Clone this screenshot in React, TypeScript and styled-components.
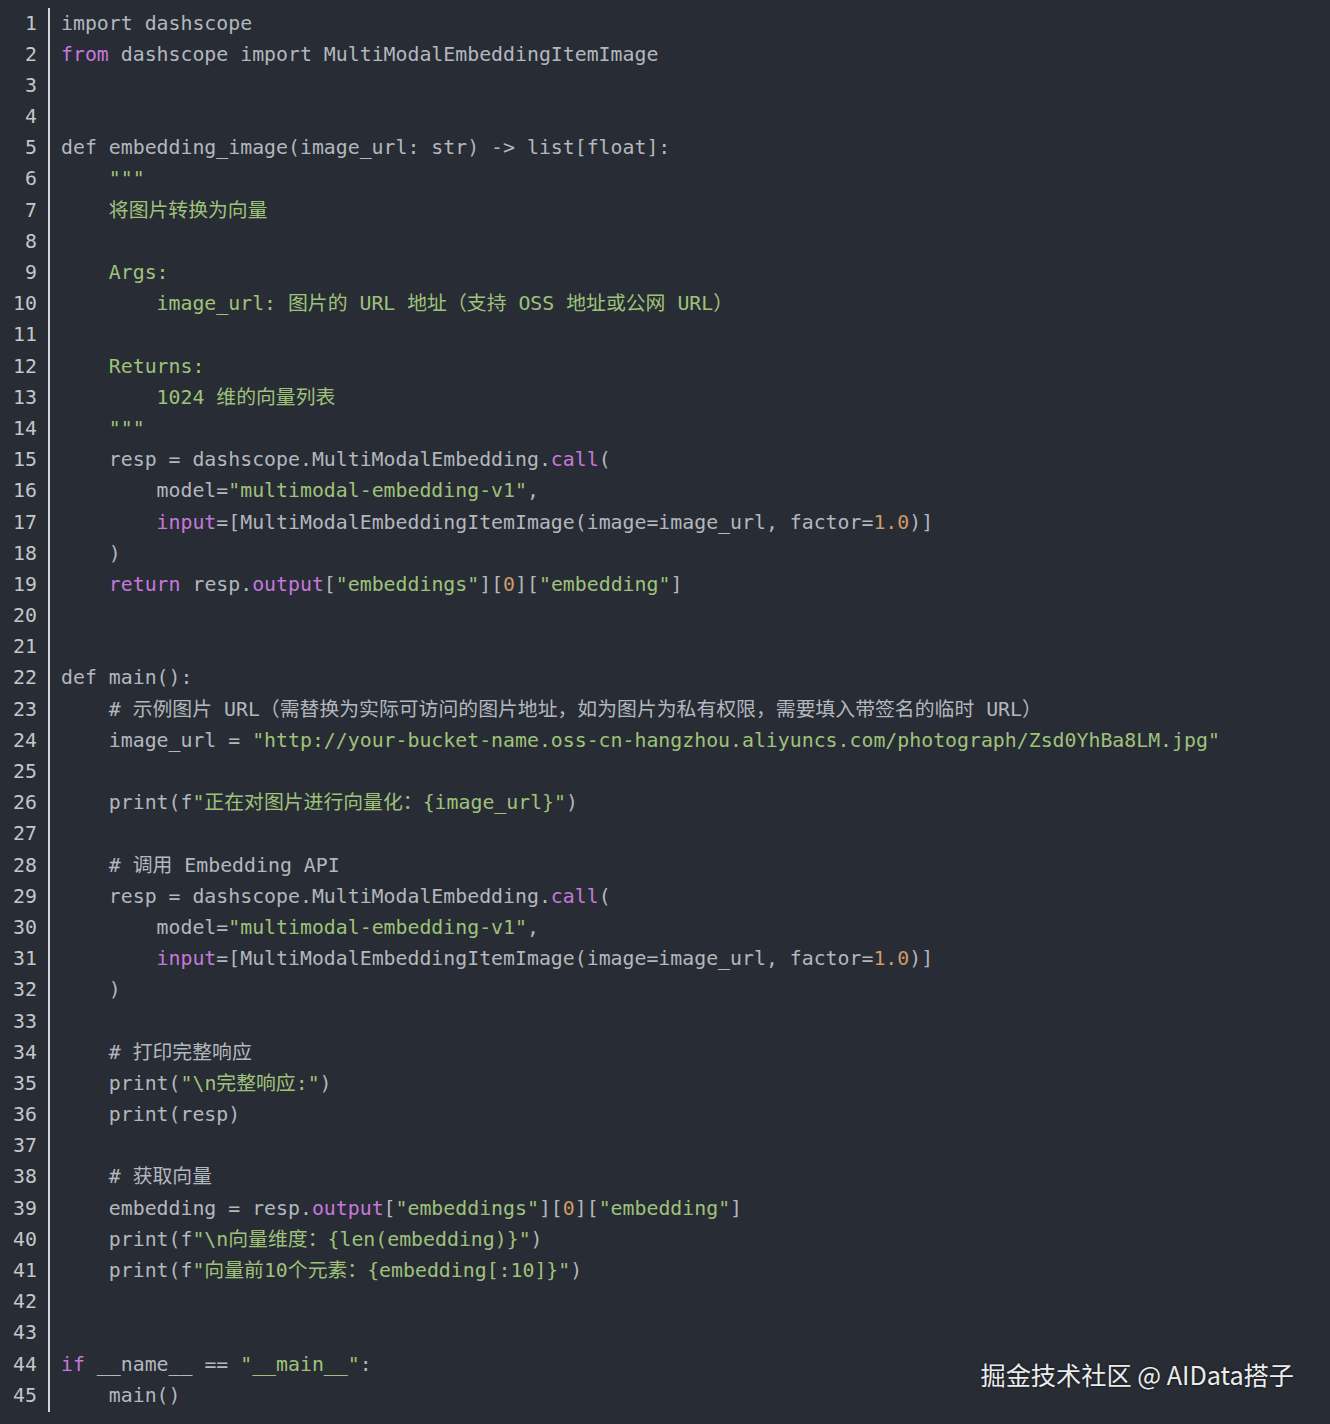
import React from "react";
import styled, { createGlobalStyle } from "styled-components";

const GlobalStyle = createGlobalStyle`
  html, body {
    margin: 0;
    padding: 0;
    background: #282c34;
  }
  body {
    width: 1330px;
    height: 1424px;
    overflow: hidden;
  }
`;

const Page = styled.div`
  position: relative;
  width: 1330px;
  height: 1424px;
  background: #282c34;
  box-sizing: border-box;
  padding-top: 7.5px;
`;

const Editor = styled.div`
  display: flex;
  font-family: "DejaVu Sans Mono", "Noto Sans CJK SC", monospace;
  font-size: 19.85px;
  line-height: 31.2px;
  white-space: pre;
`;

const Gutter = styled.div`
  width: 37px;
  padding-right: 11px;
  border-right: 2px solid #d4d6d9;
  text-align: right;
  color: #c3c6ca;
  padding-bottom: 1px;
`;

const Num = styled.div`
  height: 31.2px;
`;

const Code = styled.div`
  padding-left: 11px;
  color: #b3b7be;
`;

const Line = styled.div`
  height: 31.2px;
`;

type Kind = "k" | "s" | "n" | "p";

const Tok = styled.span<{ $kind: Kind }>`
  color: ${(p) =>
    p.$kind === "k"
      ? "#c678dd"
      : p.$kind === "s"
      ? "#9fc27a"
      : p.$kind === "n"
      ? "#d19a66"
      : "inherit"};
`;

const Watermark = styled.div`
  position: absolute;
  right: 36px;
  top: 1356px;
  font-family: "Noto Sans CJK SC", "Noto Sans", sans-serif;
  font-size: 25.2px;
  line-height: 36px;
  color: #ececec;
  text-shadow: 0 0 3px rgba(0, 0, 0, 0.6);
  white-space: pre;
`;

type Seg = [Kind, string];
const p = (t: string): Seg => ["p", t];
const k = (t: string): Seg => ["k", t];
const s = (t: string): Seg => ["s", t];
const n = (t: string): Seg => ["n", t];

const callBlock: Seg[][] = [
  [p("    resp = dashscope.MultiModalEmbedding."), k("call"), p("(")],
  [p("        model="), s('"multimodal-embedding-v1"'), p(",")],
  [
    p("        "),
    k("input"),
    p("=[MultiModalEmbeddingItemImage(image=image_url, factor="),
    n("1.0"),
    p(")]"),
  ],
  [p("    )")],
];

const lines: Seg[][] = [
  [p("import dashscope")],
  [k("from"), p(" dashscope import MultiModalEmbeddingItemImage")],
  [],
  [],
  [p("def embedding_image(image_url: str) -> list[float]:")],
  [p("    "), s('"""')],
  [p("    "), s("将图片转换为向量")],
  [],
  [p("    "), s("Args:")],
  [p("        "), s("image_url: 图片的 URL 地址（支持 OSS 地址或公网 URL）")],
  [],
  [p("    "), s("Returns:")],
  [p("        "), s("1024 维的向量列表")],
  [p("    "), s('"""')],
  ...callBlock,
  [
    p("    "),
    k("return"),
    p(" resp."),
    k("output"),
    p("["),
    s('"embeddings"'),
    p("]["),
    n("0"),
    p("]["),
    s('"embedding"'),
    p("]"),
  ],
  [],
  [],
  [p("def main():")],
  [
    p(
      "    # 示例图片 URL（需替换为实际可访问的图片地址，如为图片为私有权限，需要填入带签名的临时 URL）"
    ),
  ],
  [
    p("    image_url = "),
    s('"http://your-bucket-name.oss-cn-hangzhou.aliyuncs.com/photograph/Zsd0YhBa8LM.jpg"'),
  ],
  [],
  [p("    print(f"), s('"正在对图片进行向量化：{image_url}"'), p(")")],
  [],
  [p("    # 调用 Embedding API")],
  ...callBlock,
  [],
  [p("    # 打印完整响应")],
  [p("    print("), s('"\\n完整响应:"'), p(")")],
  [p("    print(resp)")],
  [],
  [p("    # 获取向量")],
  [
    p("    embedding = resp."),
    k("output"),
    p("["),
    s('"embeddings"'),
    p("]["),
    n("0"),
    p("]["),
    s('"embedding"'),
    p("]"),
  ],
  [p("    print(f"), s('"\\n向量维度：{len(embedding)}"'), p(")")],
  [p("    print(f"), s('"向量前10个元素：{embedding[:10]}"'), p(")")],
  [],
  [],
  [k("if"), p(" __name__ == "), s('"__main__"'), p(":")],
  [p("    main()")],
];

export default function App() {
  return (
    <Page>
      <GlobalStyle />
      <Editor>
        <Gutter>
          {lines.map((_, i) => (
            <Num key={i}>{i + 1}</Num>
          ))}
        </Gutter>
        <Code>
          {lines.map((segs, i) => (
            <Line key={i}>
              {segs.map(([kind, text], j) => (
                <Tok key={j} $kind={kind}>
                  {text}
                </Tok>
              ))}
            </Line>
          ))}
        </Code>
      </Editor>
      <Watermark>掘金技术社区 @ AIData搭子</Watermark>
    </Page>
  );
}
